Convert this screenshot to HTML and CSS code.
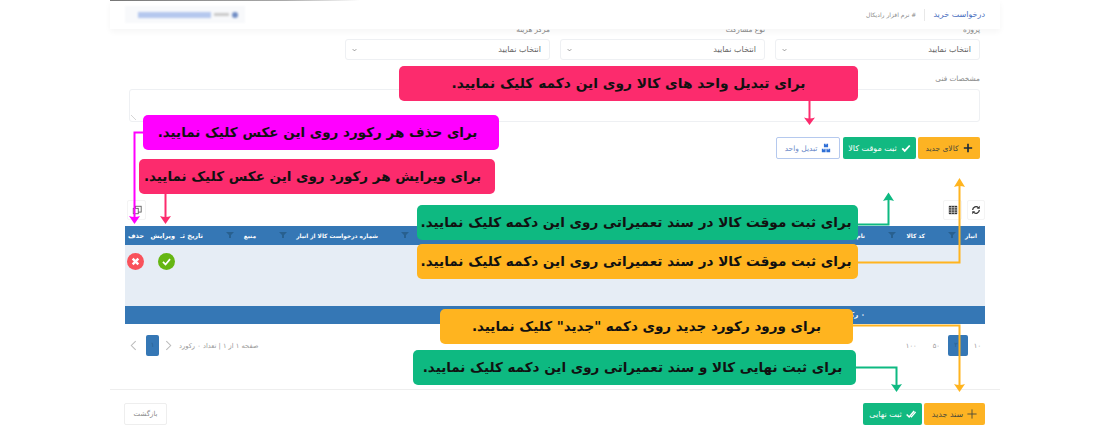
FILE: index.html

```html
<!DOCTYPE html>
<html lang="fa" dir="rtl">
<head>
    <meta charset="UTF-8">
    <meta name="viewport" content="width=device-width, initial-scale=1.0">
    <title>درخواست خرید</title>
    <link rel="stylesheet" href="styles.css">
</head>
<body>
<div class="page">
    <header class="topbar">
        <span class="page-title">درخواست خرید</span>
        <span class="company"># نرم افزار رادیکال</span>
        <span class="user-chip"><i class="chip-dot"></i><i class="chip-gray"></i><i class="chip-text"></i></span>
    </header>

    <section class="form-area">
        <div class="field-row">
            <div class="field">
                <label>پروژه</label>
                <div class="select"><span>انتخاب نمایید</span><svg class="chev" viewBox="0 0 8 6"><path d="M1 1.500l3 3 3-3" /></svg></div>
            </div>
            <div class="field">
                <label>نوع مشارکت</label>
                <div class="select"><span>انتخاب نمایید</span><svg class="chev" viewBox="0 0 8 6"><path d="M1 1.500l3 3 3-3" /></svg></div>
            </div>
            <div class="field">
                <label>مرکز هزینه</label>
                <div class="select"><span>انتخاب نمایید</span><svg class="chev" viewBox="0 0 8 6"><path d="M1 1.500l3 3 3-3" /></svg></div>
            </div>
        </div>
        <label class="tech-label">مشخصات فنی</label>
        <textarea class="textarea"></textarea>
        <div class="form-buttons">
            <button class="btn btn-orange">
                <svg class="ico" viewBox="0 0 12 12"><path d="M6 1v10M1 6h10" stroke="#1b2a3a" stroke-width="2" fill="none" /></svg>
                کالای جدید
            </button>
            <button class="btn btn-green">
                <svg class="ico" viewBox="0 0 12 12"><path d="M1.500 6.500l3 3 6-6.500" stroke="#fff" stroke-width="2.200" fill="none" /></svg>
                ثبت موقت کالا
            </button>
            <button class="btn btn-outline">
                <svg class="ico" viewBox="0 0 12 12"><path d="M3.500 1h2v1h1V1h2v4h-5zM1 7h2v1h1V7h1.500v4H1zM6.500 7H8v1h1V7h2v4H6.500z" fill="#2f6fd6" /></svg>
                تبدیل واحد
            </button>
        </div>
    </section>

    <div class="table-tools">
        <span class="tool">
            <svg viewBox="0 0 12 12"><path d="M2 6a4 4 0 0 1 7-2.600M10 6a4 4 0 0 1-7 2.600" stroke="#333" stroke-width="1.500" fill="none" /><path d="M10.500 1v3.500H7M1.500 11V7.500H5" fill="#333" /></svg>
        </span>
        <span class="tool tool-grid">
            <svg viewBox="0 0 12 12"><path d="M1 1h10v10H1z" fill="#333" /><path d="M1 3h10M1 5h10M1 7h10M1 9h10M4.300 1v10M7.700 1v10" stroke="#ddd" stroke-width=".7" /></svg>
        </span>
        <span class="tool tool-end">
            <svg viewBox="0 0 12 12"><rect x="4" y="1.500" width="7" height="7" fill="none" stroke="#555" /><rect x="1.500" y="4" width="6" height="6.500" fill="#fff" stroke="#555" /></svg>
        </span>
    </div>

    <table class="grid">
        <colgroup>
            <col class="c1"><col class="c2"><col class="c3"><col class="c4"><col class="c5"><col class="c6"><col class="c7"><col class="c8">
        </colgroup>
        <thead>
            <tr>
                <th>انبار<svg class="funnel" viewBox="0 0 8 6"><path d="M0 0h8L5 3v3H3V3z" /></svg></th>
                <th>کد کالا<svg class="funnel" viewBox="0 0 8 6"><path d="M0 0h8L5 3v3H3V3z" /></svg></th>
                <th>نام کالا<svg class="funnel" viewBox="0 0 8 6"><path d="M0 0h8L5 3v3H3V3z" /></svg></th>
                <th>شماره درخواست کالا از انبار<svg class="funnel" viewBox="0 0 8 6"><path d="M0 0h8L5 3v3H3V3z" /></svg></th>
                <th>منبع<svg class="funnel" viewBox="0 0 8 6"><path d="M0 0h8L5 3v3H3V3z" /></svg></th>
                <th class="short">تاریخ ثـ</th>
                <th class="short edit-head">ویرایش</th>
                <th class="short">حذف</th>
            </tr>
        </thead>
        <tbody>
            <tr>
                <td></td><td></td><td></td><td></td><td></td><td></td>
                <td class="cell-edit">
                    <span class="round round-green"><svg viewBox="0 0 12 12"><path d="M3.500 6.300l1.800 1.800 3.200-3.800" stroke="#fff" stroke-width="1.200" fill="none" /></svg></span>
                </td>
                <td class="cell-del">
                    <span class="round round-red"><svg viewBox="0 0 12 12"><path d="M4 4l4 4M8 4l-4 4" stroke="#fff" stroke-width="1.700" fill="none" /></svg></span>
                </td>
            </tr>
        </tbody>
        <tfoot>
            <tr><td colspan="8">۰ رکورد</td></tr>
        </tfoot>
    </table>

    <div class="pager">
        <div class="page-sizes">
            <span>۱۰</span>
            <span class="active">۲۰</span>
            <span>۵۰</span>
            <span class="size-last">۱۰۰</span>
        </div>
        <div class="page-nav">
            <span class="page-info">صفحه ۱ از ۱ | تعداد ۰ رکورد</span>
            <svg class="nav-arrow" viewBox="0 0 8 12"><path d="M1.500 1l5 5-5 5" /></svg>
            <span class="active">۱</span>
            <svg class="nav-arrow" viewBox="0 0 8 12"><path d="M6.500 1l-5 5 5 5" /></svg>
        </div>
    </div>

    <footer class="actions">
        <button class="btn btn-orange btn-wide">
            <svg class="ico" viewBox="0 0 12 12"><path d="M6 .5v11M.5 6h11" stroke="#4a4a3a" stroke-width="1.100" fill="none" /></svg>
            سند جدید
        </button>
        <button class="btn btn-green btn-final">
            <svg class="ico" viewBox="0 0 12 12"><path d="M.8 6.500l3 3 6-7" stroke="#fff" stroke-width="1.800" fill="none" /><path d="M5.500 8.500l1 1 5-6" stroke="#fff" stroke-width="1.500" fill="none" /></svg>
            ثبت نهایی
        </button>
        <button class="btn btn-back">بازگشت</button>
    </footer>

    <!-- راهنما: خطوط و پیکان ها -->
    <svg class="arrows" viewBox="0 0 1100 433">
        <g fill="none" stroke-width="2">
            <path d="M809.500 101V120" stroke="#fc2b6d" />
            <path d="M143 132.500H134.500V218" stroke="#ff00ff" />
            <path d="M165.500 194V218" stroke="#fc2b6d" />
            <path d="M858 224.500H888.500V200" stroke="#0eb981" />
            <path d="M858 262.500H959.500V186" stroke="#ffb41f" />
            <path d="M853 325.500H959.500V385" stroke="#ffb41f" />
            <path d="M856 367.500H896.500V385" stroke="#0eb981" />
        </g>
        <path d="M804 117.500q5.500 2 11 0l-5.500 7.500z" fill="#fc2b6d" />
        <path d="M129 216q5.500 2 11 0l-5.500 8z" fill="#ff00ff" />
        <path d="M160 216q5.500 2 11 0l-5.500 8z" fill="#fc2b6d" />
        <path d="M883 201q5.500-2 11 0l-5.500-8.500z" fill="#0eb981" />
        <path d="M954 187q5.500-2 11 0l-5.500-9z" fill="#ffb41f" />
        <path d="M954 384q5.500 2 11 0l-5.500 8z" fill="#ffb41f" />
        <path d="M891 384q5.500 2 11 0l-5.500 8z" fill="#0eb981" />
    </svg>

    <div class="tip tip-pink tip-unit">برای تبدیل واحد های کالا روی این دکمه کلیک نمایید.</div>
    <div class="tip tip-magenta tip-delete">برای حذف هر رکورد روی این عکس کلیک نمایید.</div>
    <div class="tip tip-pink tip-edit">برای ویرایش هر رکورد روی این عکس کلیک نمایید.</div>
    <div class="tip tip-green tip-temp">برای ثبت موقت کالا در سند تعمیراتی روی این دکمه کلیک نمایید.</div>
    <div class="tip tip-orange tip-temp2">برای ثبت موقت کالا در سند تعمیراتی روی این دکمه کلیک نمایید.</div>
    <div class="tip tip-orange tip-new">برای ورود رکورد جدید روی دکمه "جدید" کلیک نمایید.</div>
    <div class="tip tip-green tip-final">برای ثبت نهایی کالا و سند تعمیراتی روی این دکمه کلیک نمایید.</div>
</div>
</body>
</html>
```

FILE: styles.css

```css
* {
    box-sizing: border-box;
}
html, body {
    margin: 0;
    padding: 0;
    background-color: #fff;
}
body {
    font-family: "DejaVu Sans", sans-serif;
    color: #777;
    font-size: 7px;
}
.page {
    position: relative;
    width: 1100px;
    height: 433px;
    overflow: hidden;
}

/* top bar */
.topbar {
    position: relative;
    z-index: 2;
    height: 29px;
    margin: 0 100px 0 110px;
    padding: 0 15px;
    display: flex;
    align-items: center;
    background-color: #fff;
    box-shadow: 0 3px 6px rgba(0, 0, 0, 0.04);
}
.topbar::before {
    content: "";
    position: absolute;
    top: 0;
    right: 640px;
    left: 0;
    height: 1px;
    background: linear-gradient(to right, #777, #aaa 70%, #fff);
}
.page-title {
    color: #4a6fc0;
    font-size: 8px;
    padding-left: 8px;
    margin-left: 8px;
    border-left: 1px solid #e8e8e8;
    line-height: 12px;
}
.company {
    color: #8a8a8a;
    font-size: 6px;
}
.user-chip {
    margin-right: auto;
    width: 120px;
    height: 17px;
    display: flex;
    align-items: center;
    gap: 3px;
    padding: 0 7px;
    background-color: #f8f9fb;
    filter: blur(1.200px);
}
.chip-dot {
    width: 6px;
    height: 6px;
    border-radius: 50%;
    background-color: #6f8cc4;
}
.chip-gray {
    width: 15px;
    height: 3px;
    background-color: #c9c9c9;
}
.chip-text {
    width: 73px;
    height: 6px;
    background-color: #b5c8ee;
}

/* form */
.form-area {
    margin-top: -4px;
    padding: 0 120px;
}
.field-row {
    display: flex;
    gap: 10px;
}
.field {
    width: 205px;
}
.field label, .tech-label {
    display: block;
    height: 14px;
    line-height: 10px;
    font-size: 7.300px;
    color: #888;
}
.select {
    height: 21px;
    display: flex;
    align-items: center;
    justify-content: space-between;
    padding: 0 8px 0 6px;
    border: 1px solid #eef0f3;
    border-radius: 3px;
    font-size: 8px;
    color: #666;
}
.chev {
    width: 5px;
    height: 4px;
    fill: none;
    stroke: #666;
}
.field-row + .tech-label {
    margin-top: 12px;
    line-height: 14px;
}
.textarea {
    display: block;
    width: 851px;
    height: 33px;
    margin: 3px 0 0;
    padding: 0;
    background-color: #fff;
    border: 1px solid #eef0f3;
    border-radius: 3px;
    outline: none;
}
.textarea::-webkit-resizer {
    background: linear-gradient(45deg, transparent 42%, #d5d5d5 42%, #d5d5d5 58%, transparent 58%) left 1px bottom 1px / 5px 5px no-repeat;
}
.form-buttons {
    display: flex;
    gap: 2px;
    margin-top: 15px;
    height: 22px;
}
.btn {
    height: 22px;
    padding: 0;
    display: inline-flex;
    align-items: center;
    justify-content: center;
    gap: 4px;
    border: none;
    border-radius: 2px;
    font-family: inherit;
    font-size: 7.500px;
}
.ico {
    width: 10px;
    height: 10px;
    flex: none;
}
.btn-orange {
    width: 62px;
    background-color: #fdb323;
    color: #4a4a3a;
}
.btn-green {
    width: 73px;
    background-color: #12b981;
    color: #fff;
}
.btn-outline {
    width: 64px;
    margin-right: 1px;
    background-color: #fff;
    border: 1px solid #b5c9ee;
    color: #6c8ac9;
}
.form-buttons .btn-green {
    font-size: 8px;
}

/* table */
.table-tools {
    display: flex;
    gap: 5px;
    height: 20px;
    margin-top: 41px;
    padding: 0 115px 0 127px;
}
.tool {
    width: 18px;
    height: 20px;
    display: flex;
    align-items: center;
    justify-content: center;
    border: 1px solid #f4f4f4;
    border-radius: 2px;
}
.tool svg {
    width: 10px;
    height: 10px;
}
.tool-grid {
    width: 19px;
}
.tool-end {
    width: 19px;
    margin-right: auto;
}
.grid {
    width: 860px;
    margin: 6px 115px 0 0;
    table-layout: fixed;
    border-collapse: collapse;
    font-size: 5.800px;
}
.c1 { width: 52px; }
.c2 { width: 60px; }
.c3 { width: 487px; }
.c4 { width: 122px; }
.c5 { width: 53px; }
.c6 { width: 31px; }
.c7 { width: 28px; }
.c8 { width: 27px; }
.grid thead tr {
    height: 19px;
    background-color: #3577b5;
}
.grid th {
    position: relative;
    padding: 0 8px 0 0;
    color: #fff;
    font-weight: bold;
    text-align: right;
    white-space: nowrap;
}
.funnel {
    position: absolute;
    left: 15px;
    top: 6px;
    width: 8px;
    height: 6px;
    fill: #28608f;
}
.grid th.short {
    font-size: 6.500px;
}
.grid th.edit-head {
    padding-right: 5px;
}
.grid tbody tr {
    height: 61px;
    background-color: #e6edf5;
}
.grid tbody td {
    vertical-align: top;
    padding: 8px 0 0;
}
.cell-edit {
    text-align: center;
}
.grid tbody td.cell-del {
    padding-right: 7px;
    text-align: center;
}
.round {
    display: inline-block;
    width: 17px;
    height: 17px;
    border-radius: 50%;
}
.round svg {
    display: block;
    width: 17px;
    height: 17px;
}
.round-green {
    background-color: #65b612;
}
.round-red {
    background-color: #f9525b;
}
.grid tfoot tr {
    height: 18px;
    background-color: #3577b5;
}
.grid tfoot td {
    padding-right: 120px;
    color: #fff;
    font-size: 7px;
    font-weight: bold;
}

/* pager */
.pager {
    display: flex;
    justify-content: space-between;
    align-items: center;
    height: 21px;
    margin: 11px 115px 0 130px;
    font-size: 6.700px;
    color: #999;
}
.page-sizes {
    display: flex;
    align-items: center;
    gap: 8px;
    padding-right: 4px;
}
.page-sizes .active {
    width: 20px;
    margin-right: -2px;
}
.size-last {
    margin-right: 8px;
}
.active {
    height: 21px;
    line-height: 21px;
    border-radius: 2px;
    background-color: #3577b5;
    color: #28608f;
    text-align: center;
}
.page-nav {
    display: flex;
    align-items: center;
    gap: 6px;
}
.page-nav .active {
    width: 13px;
    margin-left: 3px;
}
.page-info {
    margin-left: 1px;
}
.nav-arrow {
    width: 7px;
    height: 11px;
    fill: none;
    stroke: #bbb;
    stroke-width: 1.200;
}

/* footer buttons */
.actions {
    display: flex;
    gap: 2px;
    height: 36px;
    margin: 33px 100px 0 110px;
    padding: 13px 15px 0 14px;
    border-top: 1px solid #eee;
}
.btn-wide {
    width: 61px;
    font-size: 8px;
}
.btn-final {
    width: 59px;
    font-size: 8px;
}
.btn-back {
    width: 43px;
    margin-right: auto;
    background-color: #fff;
    border: 1px solid #eee;
    color: #888;
    font-size: 7px;
}

/* overlay arrows and tips */
.arrows {
    position: absolute;
    top: 0;
    left: 0;
    width: 1100px;
    height: 433px;
    z-index: 3;
    direction: ltr;
}
.tip {
    position: absolute;
    z-index: 4;
    height: 35px;
    line-height: 34px;
    border-radius: 5px;
    color: #111;
    font-size: 13.600px;
    font-weight: bold;
    text-align: center;
    white-space: nowrap;
}
.tip-pink { background-color: #fc2b6d; }
.tip-magenta { background-color: #ff00ff; }
.tip-green { background-color: #0eb981; }
.tip-orange { background-color: #ffb41f; }
.tip-unit { left: 399px; top: 66px; width: 459px; font-size: 13.800px; }
.tip-delete { left: 143px; top: 115px; width: 356px; padding-right: 7px; font-size: 13.500px; }
.tip-edit { left: 139px; top: 159px; width: 356px; padding-right: 9px; font-size: 13.500px; }
.tip-temp { left: 417px; top: 205px; width: 441px; padding-right: 3px; }
.tip-temp2 { left: 417px; top: 244px; width: 441px; padding-right: 3px; }
.tip-new { left: 440px; top: 309px; width: 413px; font-size: 13.500px; }
.tip-final { left: 413px; top: 350px; width: 443px; padding-right: 4px; font-size: 13.500px; }
```
